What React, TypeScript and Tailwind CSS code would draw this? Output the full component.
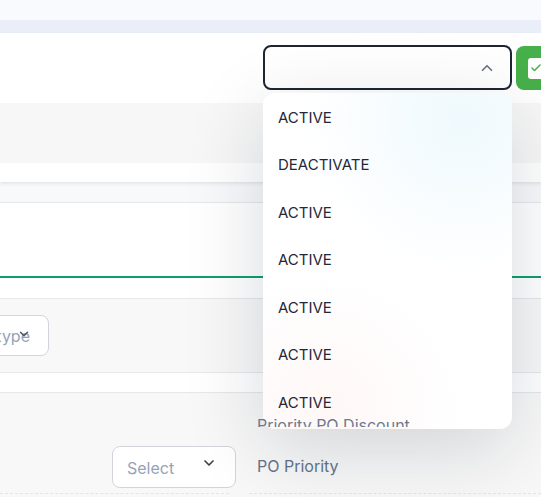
import { ChevronUp, ChevronDown, Check } from 'lucide-react'

const statuses = ['ACTIVE', 'DEACTIVATE', 'ACTIVE', 'ACTIVE', 'ACTIVE', 'ACTIVE', 'ACTIVE']

export default function App() {
  return (
    <div className="relative h-[497px] w-[541px] overflow-hidden bg-[#f8f9fb] font-['Inter',sans-serif]">
      {/* Top strips */}
      <div className="h-[20px] bg-[#f8fafd]" />
      <div className="h-[13px] bg-[#e9eef8]" />

      {/* Header card */}
      <div className="bg-white shadow-[0_2px_3px_rgba(0,0,0,0.08)]">
        <div className="flex h-[70px] items-start pt-[12px]">
          <div className="ml-[263px] flex h-[45px] w-[249px] shrink-0 items-center justify-end rounded-lg border-2 border-[#1e2533] bg-white pr-[14px]">
            <ChevronUp className="h-[18px] w-[18px] text-[#6b7280]" strokeWidth={2.2} />
          </div>
          <div className="ml-[4px] mt-[1px] flex h-[44px] w-[40px] shrink-0 items-center rounded-l-lg bg-[#46b04a] pl-[12px]">
            <div className="flex h-[21px] w-[16px] items-center justify-center rounded-l-[3px] bg-white">
              <Check className="h-[12px] w-[12px] text-[#46b04a]" strokeWidth={3} />
            </div>
          </div>
        </div>
        <div className="h-[60px] bg-[#f7f7f7]" />
        <div className="h-[19px] bg-white" />
      </div>

      <div className="h-[20px]" />

      {/* Content card */}
      <div className="border-t border-[#e5e7eb] bg-white">
        <div className="h-[75px] border-b-2 border-[#0e9f6e]" />
        <div className="h-[21px] border-b border-[#e5e7eb]" />
        <div className="flex h-[73px] items-center bg-[#f8f8f8]">
          <div className="relative -ml-[60px] flex h-[41px] w-[109px] shrink-0 items-center justify-end rounded-lg border border-[#d1d5db] bg-white pr-[18px] text-[16px] text-[#94a3b8]">
            type
            <ChevronDown className="absolute right-[17px] top-[11px] h-[14px] w-[14px] text-[#4b5563]" strokeWidth={2.5} />
          </div>
        </div>
        <div className="h-[21px] border-y border-[#e5e7eb] bg-white" />
        <div className="relative h-[104px] bg-[#f8f8f8]">
          {/* label of the row above, cut off where the next row starts */}
          <div className="relative z-20 flex pt-[26px]">
            <div className="w-[257px] shrink-0" />
            <div className="h-[8px] overflow-hidden">
              <span className="-mt-[4px] block text-[16px] leading-[20px] text-[#6b7a8f]">Priority PO Discount</span>
            </div>
          </div>
          <div className="mt-[19px] flex items-center">
            <div className="ml-[112px] flex h-[42px] w-[124px] shrink-0 items-center justify-between rounded-lg border border-[#d1d5db] bg-white pl-[14px] pr-[18px]">
              <span className="mt-[2px] text-[16px] text-[#94a3b8]">Select</span>
              <ChevronDown className="-mt-[8px] h-[16px] w-[16px] text-[#374151]" strokeWidth={2.5} />
            </div>
            <span className="ml-[21px] -mt-[3px] text-[16px] text-[#64748b]">PO Priority</span>
          </div>
          <div className="mt-[5px] flex gap-[20px]">
            <div className="w-[229px] border-t border-dashed border-[#e2e5ea]" />
            <div className="flex-1 border-t border-dashed border-[#e2e5ea]" />
          </div>
        </div>
      </div>

      {/* Open dropdown menu */}
      <div className="absolute left-[263px] top-[93px] z-10 w-[249px] rounded-xl bg-white bg-[radial-gradient(circle_at_80%_8%,rgba(228,245,252,0.6),transparent_42%),radial-gradient(circle_at_25%_95%,rgba(254,238,236,0.45),transparent_38%)] pb-[3px] shadow-[0_20px_80px_rgba(15,23,42,0.16)]">
        {statuses.map((s, i) => (
          <div key={i} className="flex h-[47.5px] items-center pl-[15px] pt-[2px] text-[15px] text-[#1f2937]">
            {s}
          </div>
        ))}
      </div>
    </div>
  )
}
